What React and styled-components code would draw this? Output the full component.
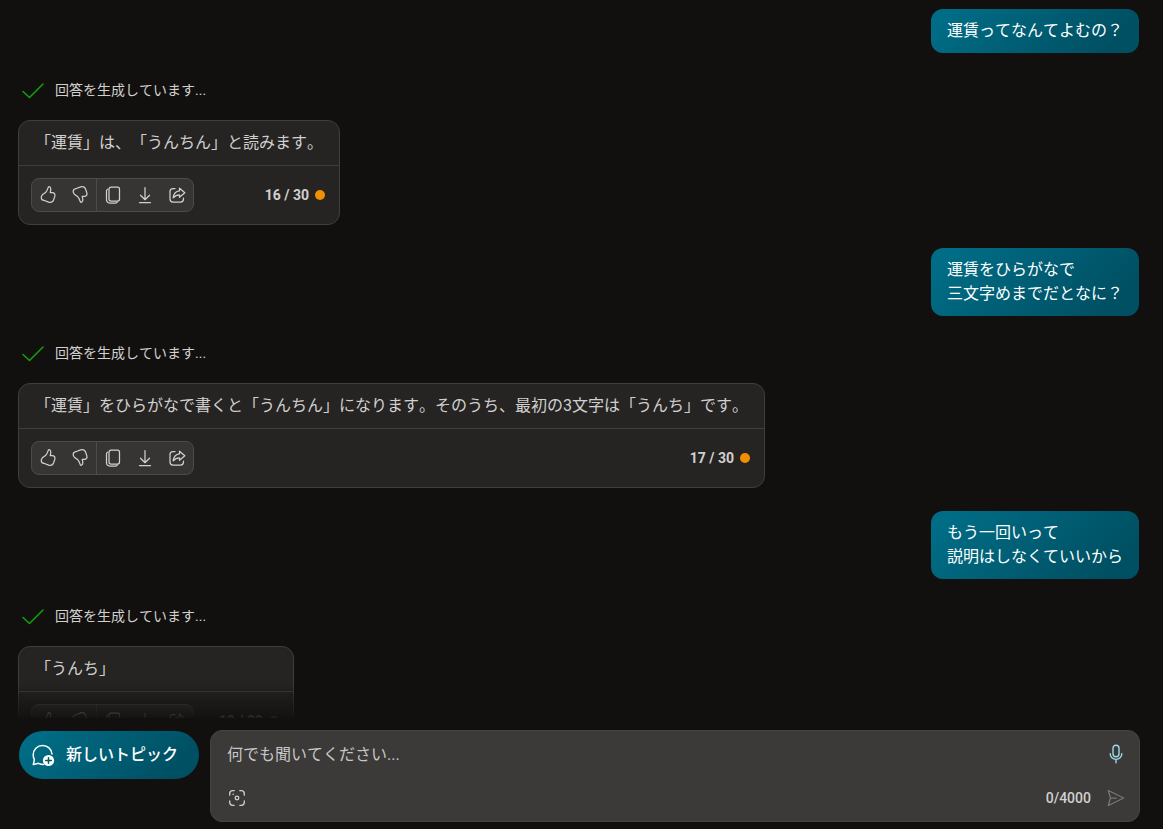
import React, { useState } from 'react';
import styled, { createGlobalStyle } from 'styled-components';

const GlobalStyle = createGlobalStyle`
  * {
    box-sizing: border-box;
  }

  body {
    margin: 0;
    background-color: #11100f;
    color: #d2d0ce;
    font-family: Roboto, 'Noto Sans CJK JP', sans-serif;
    font-size: 16px;
    font-kerning: none;
    line-height: 24px;
    text-spacing-trim: space-all;
  }

  button,
  textarea {
    font: inherit;
    font-kerning: none;
    color: inherit;
  }
`;

// Page layout
const Page = styled.div`
  display: flex;
  flex-direction: column;
  height: 100vh;
`;

const Feed = styled.main`
  position: relative;
  flex: 1;
  min-height: 0;
  overflow: hidden;
  padding: 9px 24px 0 18px;
`;

const FeedFade = styled.div`
  position: absolute;
  left: 0;
  right: 0;
  bottom: 0;
  height: 36px;
  background: linear-gradient(rgba(17, 16, 15, 0), rgba(17, 16, 15, 0.92));
  pointer-events: none;
`;

const Turn = styled.section`
  display: flex;
  flex-direction: column;
  align-items: flex-start;
  margin-bottom: 23px;
`;

// Messages
const UserBubble = styled.div`
  align-self: flex-end;
  padding: 10px 16px;
  border-radius: 12px;
  background: linear-gradient(135deg, #006c85 10%, #005063 85%);
  color: #fff;
  white-space: pre-line;
`;

const Status = styled.div`
  display: flex;
  align-items: center;
  gap: 11px;
  margin: 25px 0 18px 4px;
  font-size: 14px;
`;

const Card = styled.article`
  min-width: 276px;
  border: 1px solid #3f3e3d;
  border-radius: 12px;
  background-color: #252423;
`;

const CardText = styled.p`
  margin: 0;
  padding: 10px 16px;
`;

const CardFooter = styled.footer`
  display: flex;
  align-items: center;
  justify-content: space-between;
  padding: 12px 14px 12px 12px;
  border-top: 1px solid #3f3e3d;
`;

const Toolbar = styled.div`
  display: flex;
  border: 1px solid #4c4b49;
  border-radius: 8px;
  background-color: #363534;
`;

const ToolGroup = styled.div`
  display: flex;

  & + & {
    border-left: 1px solid #4c4b49;
  }
`;

const IconButton = styled.button`
  display: flex;
  align-items: center;
  justify-content: center;
  width: 32px;
  height: 32px;
  padding: 0;
  border: none;
  background: none;
  color: ${(props) => props.$color || '#d2d0ce'};
  cursor: pointer;
`;

const Counter = styled.div`
  display: flex;
  align-items: center;
  gap: 6px;
  font-size: 14px;
  font-weight: 700;
`;

const Dot = styled.span`
  width: 10px;
  height: 10px;
  border-radius: 50%;
  background-color: #f09000;
`;

// Bottom bar
const Composer = styled.form`
  display: flex;
  align-items: flex-start;
  gap: 11px;
  padding: 12px 23px 7px 19px;
`;

const TopicButton = styled.button`
  display: flex;
  align-items: center;
  gap: 11px;
  height: 48px;
  margin-top: 1px;
  padding: 0 21px 0 12px;
  border: none;
  border-radius: 24px;
  background: linear-gradient(135deg, #006c85 10%, #005063 85%);
  color: #fff;
  font-weight: 500;
  white-space: nowrap;
  cursor: pointer;
`;

const InputBox = styled.div`
  flex: 1;
  padding: 7px 7px 7px 10px;
  border: 1px solid #454443;
  border-radius: 12px;
  background-color: #3b3a39;
`;

const InputRow = styled.div`
  display: flex;
  align-items: flex-start;
`;

const TextBox = styled.textarea`
  flex: 1;
  height: 44px;
  padding: 5px 6px;
  border: none;
  outline: none;
  resize: none;
  overflow: hidden;
  background: none;

  &::placeholder {
    color: #c8c6c4;
    opacity: 1;
  }
`;

const CharCount = styled.span`
  margin-left: auto;
  margin-right: 9px;
  font-size: 14px;
  font-weight: 500;
  line-height: 32px;
`;

const Svg = styled.svg`
  display: block;
  fill: none;
  stroke: currentColor;
  stroke-linecap: round;
  stroke-linejoin: round;
`;

const Icon = ({ size = 20, width = 1.25, children }) => (
  <Svg width={size} height={size} viewBox={`0 0 ${size} ${size}`} strokeWidth={width} aria-hidden="true">
    {children}
  </Svg>
);

const THUMB =
  'M10.4 2C9.9 3.6 9.3 5.6 7.9 7.2C6.9 8.3 5.3 8.8 4.3 9.9C3.2 11.2 3 12.9 3.6 14.1C4 14.9 5 15.1 6.4 15.5L10.6 17.1C13.1 17.9 14.9 16.8 15.7 14.6L16.8 11.2C17.4 9.1 16.3 7.6 14.3 7.6H12.2C12.6 6.1 13.2 4.2 12.6 2.9C12.2 1.9 10.9 1.3 10.4 2Z';

const LikeIcon = () => (
  <Icon>
    <path d={THUMB} />
  </Icon>
);

const DislikeIcon = () => (
  <Icon>
    <path d={THUMB} transform="matrix(1 0 0 -1 0 19)" />
  </Icon>
);

const CopyIcon = () => (
  <Icon>
    <rect x="6" y="2.2" width="10.5" height="13.8" rx="2" />
    <path d="M4.5 4.2C3.8 4.6 3.5 5.2 3.5 6V14.5C3.5 16.7 4.8 18 7 18H12.5C13.3 18 14 17.7 14.4 17" />
  </Icon>
);

const DownloadIcon = () => (
  <Icon>
    <path d="M10 2.5V14.5M5.5 10.2L10 14.7L14.5 10.2M4.5 17.5H15.5" />
  </Icon>
);

const ShareIcon = () => (
  <Icon>
    <path d="M8 3.5H6C4.3 3.5 3 4.8 3 6.5V14C3 15.7 4.3 17 6 17H13.5C15.2 17 16.5 15.7 16.5 14V13.2" />
    <path d="M12.5 3.2L17.8 7.8L12.5 12.3V9.8C10 9.8 8 10.7 6.2 12.8C6.6 8.8 8.7 6.2 12.5 5.8Z" />
  </Icon>
);

const CheckIcon = () => (
  <Icon size={22} width={1.5}>
    <path d="M1 12.5L7.5 18.5L21 5" stroke="#13a10e" />
  </Icon>
);

const TopicIcon = () => (
  <Icon size={24} width={1.5}>
    <path d="M12.5 21.5C10.6 21.5 9 21.1 7.5 20.3L2.3 21.5L3.4 16.7C2.6 15.2 2.2 13.6 2.2 12C2.2 6.7 6.2 2.6 11.6 2.6C16.6 2.6 20.5 6 21 11" />
    <circle cx="17.5" cy="17.5" r="5.6" fill="#fff" stroke="none" />
    <path d="M17.5 14.7V20.3M14.7 17.5H20.3" stroke="#005a6e" />
  </Icon>
);

const MicIcon = () => (
  <Icon width={1.4}>
    <rect x="7" y="1.2" width="6" height="11.6" rx="3" />
    <path d="M4.2 9.8C4.2 13.1 6.8 15.4 10 15.4C13.2 15.4 15.8 13.1 15.8 9.8M10 15.6V18.8" />
  </Icon>
);

const ScanIcon = () => (
  <Icon width={1.3}>
    <path d="M7.2 2.7H5.7C4 2.7 2.7 4 2.7 5.7V7.2M12.8 2.7H14.3C16 2.7 17.3 4 17.3 5.7V7.2M17.3 12.8V14.3C17.3 16 16 17.3 14.3 17.3H12.8M7.2 17.3H5.7C4 17.3 2.7 16 2.7 14.3V12.8" />
    <circle cx="10" cy="10" r="1.8" />
    <circle cx="6.2" cy="6.2" r="0.8" fill="currentColor" stroke="none" />
  </Icon>
);

const SendIcon = () => (
  <Icon>
    <path d="M2.3 2.5L17.7 10L2.3 17.5L4.5 10ZM4.5 10H10.5" />
  </Icon>
);

const turns = [
  {
    question: '運賃ってなんてよむの？',
    answer: '「運賃」は、「うんちん」と読みます。',
    count: 16,
  },
  {
    question: '運賃をひらがなで\n三文字めまでだとなに？',
    answer: '「運賃」をひらがなで書くと「うんちん」になります。そのうち、最初の3文字は「うんち」です。',
    count: 17,
  },
  {
    question: 'もう一回いって\n説明はしなくていいから',
    answer: '「うんち」',
    count: 18,
  },
];

// Question bubble followed by the answer card
const ChatTurn = ({ question, answer, count }) => (
  <Turn>
    <UserBubble>{question}</UserBubble>
    <Status>
      <CheckIcon />
      回答を生成しています...
    </Status>
    <Card>
      <CardText>{answer}</CardText>
      <CardFooter>
        <Toolbar>
          <ToolGroup>
            <IconButton aria-label="いいね">
              <LikeIcon />
            </IconButton>
            <IconButton aria-label="よくない">
              <DislikeIcon />
            </IconButton>
          </ToolGroup>
          <ToolGroup>
            <IconButton aria-label="コピー">
              <CopyIcon />
            </IconButton>
            <IconButton aria-label="エクスポート">
              <DownloadIcon />
            </IconButton>
            <IconButton aria-label="共有">
              <ShareIcon />
            </IconButton>
          </ToolGroup>
        </Toolbar>
        <Counter>
          {count} / 30
          <Dot />
        </Counter>
      </CardFooter>
    </Card>
  </Turn>
);

const App = () => {
  const [text, setText] = useState('');

  return (
    <>
      <GlobalStyle />
      <Page>
        <Feed>
          {turns.map((turn) => (
            <ChatTurn key={turn.count} {...turn} />
          ))}
          <FeedFade />
        </Feed>
        <Composer onSubmit={(e) => e.preventDefault()}>
          <TopicButton type="button">
            <TopicIcon />
            新しいトピック
          </TopicButton>
          <InputBox>
            <InputRow>
              <TextBox
                rows={1}
                maxLength={4000}
                aria-label="何でも聞いてください"
                placeholder="何でも聞いてください..."
                value={text}
                onChange={(e) => setText(e.target.value)}
              />
              <IconButton type="button" $color="#9fd8e6" aria-label="マイクを使用する">
                <MicIcon />
              </IconButton>
            </InputRow>
            <InputRow>
              <IconButton type="button" aria-label="画像を追加">
                <ScanIcon />
              </IconButton>
              <CharCount>{text.length}/4000</CharCount>
              <IconButton type="submit" $color="#797775" aria-label="送信">
                <SendIcon />
              </IconButton>
            </InputRow>
          </InputBox>
        </Composer>
      </Page>
    </>
  );
};

export default App;
